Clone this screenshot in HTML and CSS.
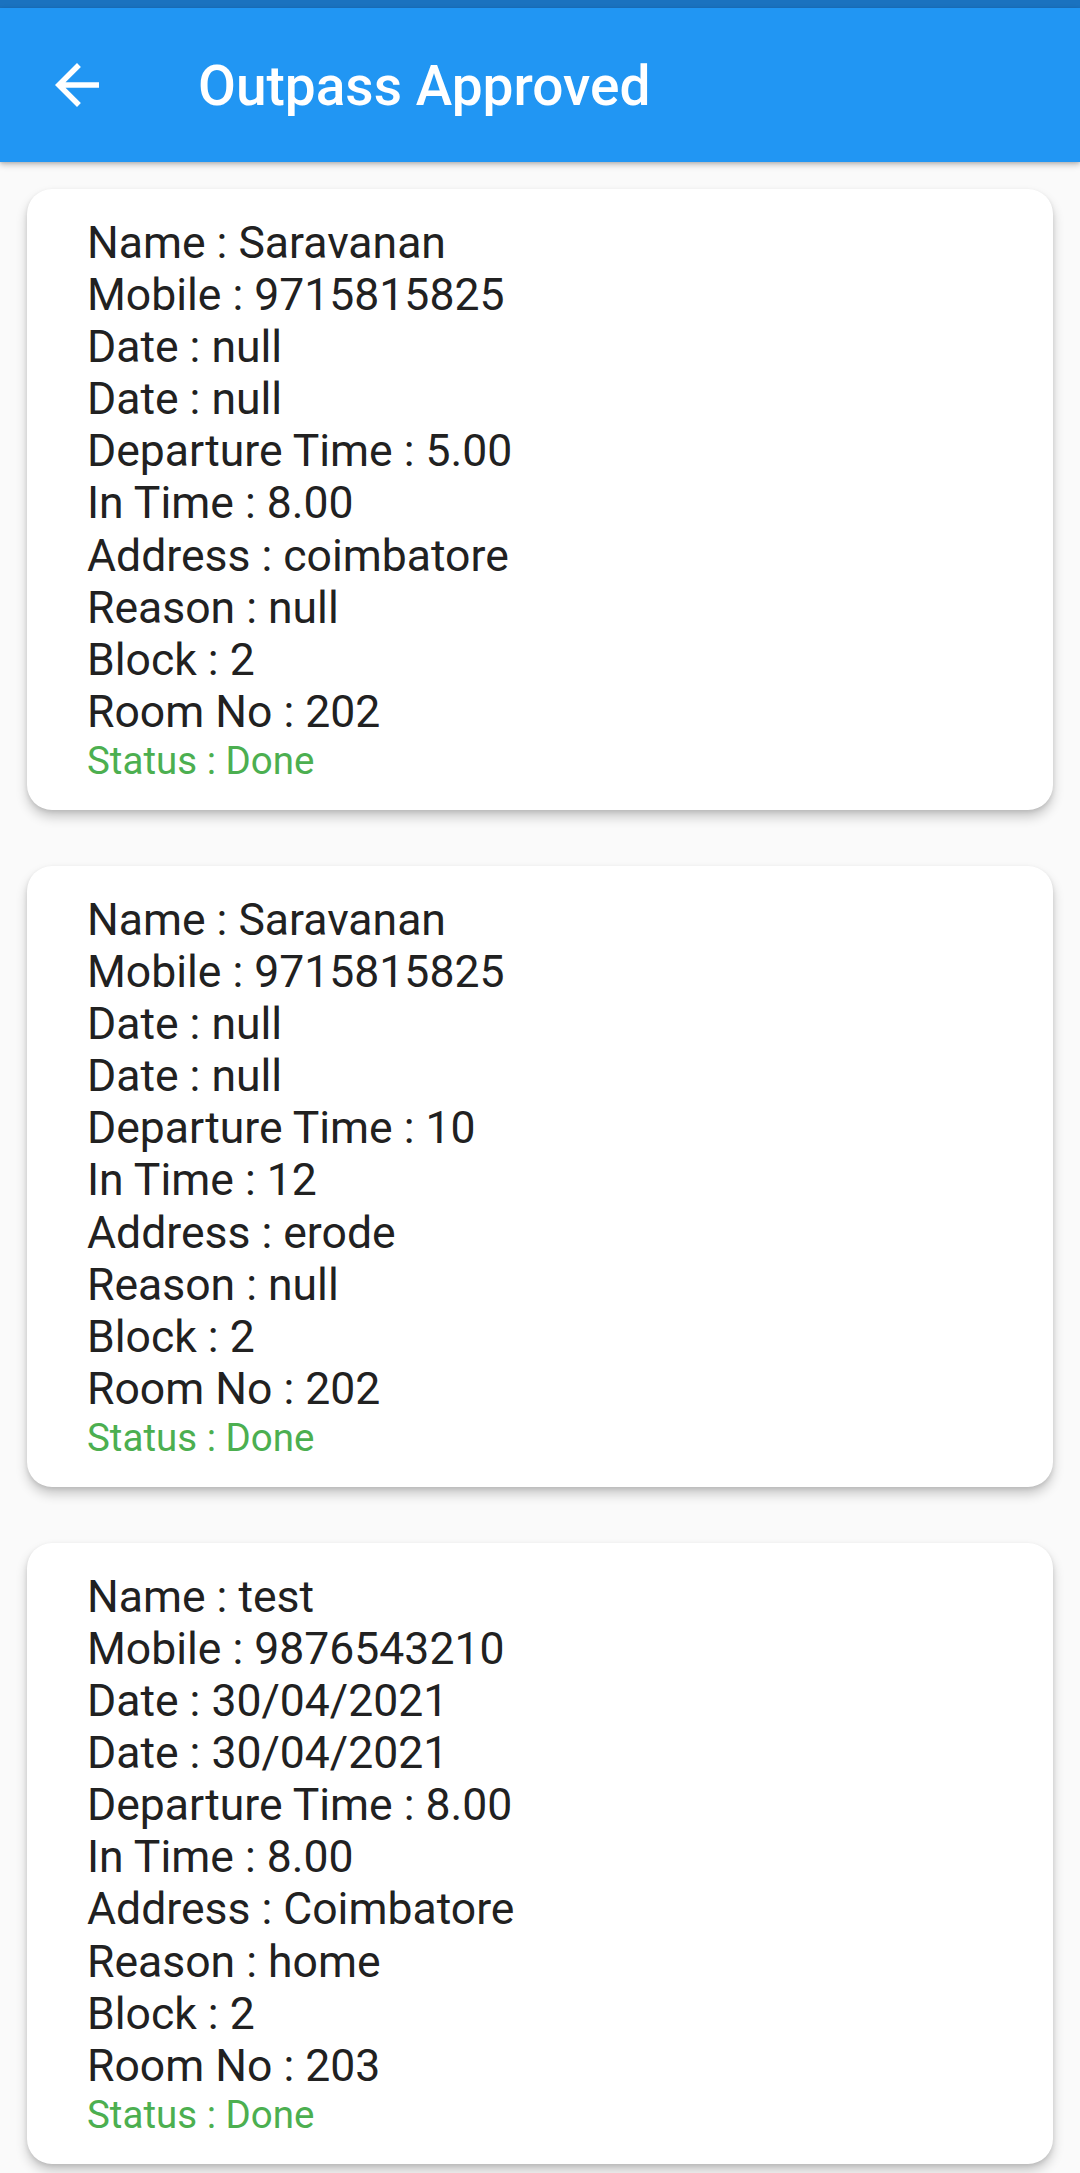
FILE: index.html
```html
<!DOCTYPE html>
<html>
<head>
<meta charset="utf-8">
<link rel="stylesheet" href="styles.css">
</head>
<body>
<div class="statusbar"></div>
<header class="appbar">
  <div class="back">
    <svg viewBox="0 0 24 24" width="66" height="66"><path fill="#fff" d="M20 11H7.83l5.59-5.59L12 4l-8 8 8 8 1.41-1.41L7.83 13H20v-2z"/></svg>
  </div>
  <h1 class="title">Outpass Approved</h1>
</header>
<main class="list">
  <section class="card">
    <div class="line">Name : Saravanan</div>
    <div class="line">Mobile : 9715815825</div>
    <div class="line">Date : null</div>
    <div class="line">Date : null</div>
    <div class="line">Departure Time : 5.00</div>
    <div class="line">In Time : 8.00</div>
    <div class="line">Address : coimbatore</div>
    <div class="line">Reason : null</div>
    <div class="line">Block : 2</div>
    <div class="line">Room No : 202</div>
    <div class="status">Status : Done</div>
  </section>
  <section class="card">
    <div class="line">Name : Saravanan</div>
    <div class="line">Mobile : 9715815825</div>
    <div class="line">Date : null</div>
    <div class="line">Date : null</div>
    <div class="line">Departure Time : 10</div>
    <div class="line">In Time : 12</div>
    <div class="line">Address : erode</div>
    <div class="line">Reason : null</div>
    <div class="line">Block : 2</div>
    <div class="line">Room No : 202</div>
    <div class="status">Status : Done</div>
  </section>
  <section class="card">
    <div class="line">Name : test</div>
    <div class="line">Mobile : 9876543210</div>
    <div class="line">Date : 30/04/2021</div>
    <div class="line">Date : 30/04/2021</div>
    <div class="line">Departure Time : 8.00</div>
    <div class="line">In Time : 8.00</div>
    <div class="line">Address : Coimbatore</div>
    <div class="line">Reason : home</div>
    <div class="line">Block : 2</div>
    <div class="line">Room No : 203</div>
    <div class="status">Status : Done</div>
  </section>
</main>
</body>
</html>
```
FILE: styles.css
```css
html, body {
  margin: 0;
  padding: 0;
}
body {
  background: #fafafa;
  font-family: Roboto, "Noto Sans", sans-serif;
  width: 1080px;
  height: 2173px;
  overflow: hidden;
}
.statusbar {
  height: 8px;
  background: #1a72bf;
}
.appbar {
  height: 154px;
  background: #2196f3;
  display: flex;
  align-items: center;
  box-shadow: 0 3px 6px rgba(0,0,0,0.22), 0 1px 3px rgba(0,0,0,0.12);
  position: relative;
  z-index: 2;
}
.back {
  width: 66px;
  height: 66px;
  margin-left: 44px;
  display: flex;
}
.title {
  margin: 0 0 0 88px;
  padding-top: 3px;
  color: #fff;
  font-size: 55px;
  font-weight: 500;
  line-height: 1.17;
}
.list {
  display: flex;
  flex-direction: column;
  gap: 56px;
  padding: 27px 27px 0 27px;
}
.card {
  background: #fff;
  border-radius: 25px;
  padding: 28px 40px 27px 60px;
  box-shadow: 0 7px 12px rgba(0,0,0,0.2), 0 2px 4px rgba(0,0,0,0.1);
}
.line {
  font-size: 44.5px;
  line-height: 52.1px;
  color: #212121;
}
.status {
  font-size: 38.5px;
  line-height: 45px;
  color: #4caf50;
}
```
